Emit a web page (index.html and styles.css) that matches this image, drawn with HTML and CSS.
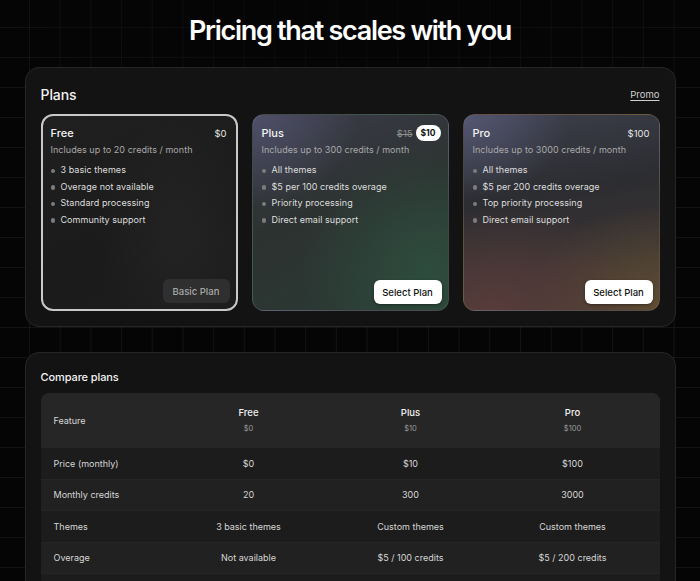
FILE: index.html
```html
<!DOCTYPE html>
<html lang="en">
<head>
<meta charset="utf-8">
<title>Pricing</title>
<link rel="stylesheet" href="styles.css">
</head>
<body>
<main class="page">
  <h1 class="title">Pricing that scales with you</h1>

  <section class="panel plans">
    <div class="panel-head">
      <h2 class="panel-title">Plans</h2>
      <a class="promo" href="#">Promo</a>
    </div>
    <div class="cards">
      <article class="card card-free">
        <div class="card-top">
          <span class="card-name">Free</span>
          <span class="card-price">$0</span>
        </div>
        <p class="card-sub">Includes up to 20 credits / month</p>
        <ul class="features">
          <li>3 basic themes</li>
          <li>Overage not available</li>
          <li>Standard processing</li>
          <li>Community support</li>
        </ul>
        <div class="card-foot"><button class="btn btn-muted">Basic Plan</button></div>
      </article>

      <article class="card card-plus">
        <div class="card-top">
          <span class="card-name">Plus</span>
          <span class="card-price"><s class="old">$15</s><span class="pill">$10</span></span>
        </div>
        <p class="card-sub">Includes up to 300 credits / month</p>
        <ul class="features">
          <li>All themes</li>
          <li>$5 per 100 credits overage</li>
          <li>Priority processing</li>
          <li>Direct email support</li>
        </ul>
        <div class="card-foot"><button class="btn btn-light">Select Plan</button></div>
      </article>

      <article class="card card-pro">
        <div class="card-top">
          <span class="card-name">Pro</span>
          <span class="card-price">$100</span>
        </div>
        <p class="card-sub">Includes up to 3000 credits / month</p>
        <ul class="features">
          <li>All themes</li>
          <li>$5 per 200 credits overage</li>
          <li>Top priority processing</li>
          <li>Direct email support</li>
        </ul>
        <div class="card-foot"><button class="btn btn-light">Select Plan</button></div>
      </article>
    </div>
  </section>

  <section class="panel compare">
    <div class="panel-head">
      <h2 class="panel-title small">Compare plans</h2>
    </div>
    <div class="table">
      <div class="row head">
        <div class="cell label">Feature</div>
        <div class="cell col"><span class="plan">Free</span><span class="plan-price">$0</span></div>
        <div class="cell col"><span class="plan">Plus</span><span class="plan-price">$10</span></div>
        <div class="cell col"><span class="plan">Pro</span><span class="plan-price">$100</span></div>
      </div>
      <div class="row">
        <div class="cell label">Price (monthly)</div>
        <div class="cell col">$0</div>
        <div class="cell col">$10</div>
        <div class="cell col">$100</div>
      </div>
      <div class="row alt">
        <div class="cell label">Monthly credits</div>
        <div class="cell col">20</div>
        <div class="cell col">300</div>
        <div class="cell col">3000</div>
      </div>
      <div class="row">
        <div class="cell label">Themes</div>
        <div class="cell col">3 basic themes</div>
        <div class="cell col">Custom themes</div>
        <div class="cell col">Custom themes</div>
      </div>
      <div class="row alt">
        <div class="cell label">Overage</div>
        <div class="cell col">Not available</div>
        <div class="cell col">$5 / 100 credits</div>
        <div class="cell col">$5 / 200 credits</div>
      </div>
      <div class="row row-more"></div>
    </div>
  </section>
</main>
</body>
</html>
```

FILE: styles.css
```css
* { box-sizing: border-box; }

html, body { height: 100%; }

body {
  margin: 0;
  font-family: Inter, "Noto Sans", "Liberation Sans", sans-serif;
  color: #e8e8e8;
  background-color: #050505;
  background-image:
    radial-gradient(ellipse 420px 160px at 50% 10px, rgba(5,5,5,0.85), rgba(5,5,5,0) 100%),
    linear-gradient(to right, rgba(255,255,255,0.055) 1px, transparent 1px),
    linear-gradient(to bottom, rgba(255,255,255,0.055) 1px, transparent 1px);
  background-size: 100% 100%, 30.7px 30.7px, 30.7px 30px;
  background-position: 0 0, 29px 0, 0 27px;
  overflow: hidden;
}

.page {
  width: 651px;
  margin: 0 auto;
  padding-top: 14px;
  display: flex;
  flex-direction: column;
}

.title {
  margin: 0 0 19px;
  font-size: 27px;
  line-height: 34px;
  font-weight: 600;
  letter-spacing: -1.3px;
  text-align: center;
  color: #fff;
}

.panel {
  background: #131313;
  border: 1px solid #262626;
  border-radius: 14px;
  padding: 15px;
}

.plans { height: 260px; }

.compare { margin-top: 25px; padding-bottom: 0; }

.panel-head {
  display: flex;
  justify-content: space-between;
  align-items: center;
  height: 22px;
  margin-bottom: 9px;
}

.compare .panel-head { height: 18px; margin-bottom: 7px; }

.panel-title {
  margin: 0;
  font-size: 14px;
  font-weight: 500;
  color: #f2f2f2;
  letter-spacing: -0.1px;
}

.panel-title.small { font-size: 11px; }

.promo {
  font-size: 9.5px;
  color: #d0d0d0;
  text-decoration: underline;
  text-underline-offset: 2px;
}

.cards {
  display: grid;
  grid-template-columns: repeat(3, 197px);
  justify-content: space-between;
}

.card {
  height: 197px;
  border-radius: 12px;
  padding: 9px 9px 6px 9px;
  display: flex;
  flex-direction: column;
  border: 1px solid rgba(255,255,255,0.12);
}

.card-free {
  border: 2px solid #c9c9c9;
  padding: 8px 9px 5px 8px;
  background:
    radial-gradient(ellipse 120px 160px at 70% 60%, rgba(40,40,40,0.6), transparent 70%),
    linear-gradient(160deg, #202020 0%, #1b1b1b 60%, #1d1d1d 100%);
}

.card-plus {
  background:
    radial-gradient(ellipse 150px 130px at 0% 0%, rgba(86,86,116,0.75), transparent 70%),
    radial-gradient(ellipse 170px 170px at 90% 80%, rgba(46,80,64,0.85), transparent 75%),
    linear-gradient(160deg, #3b3d4a 0%, #2d3231 45%, #2a3a33 100%);
  border-color: rgba(255,255,255,0.1);
}

.card-pro {
  background:
    radial-gradient(ellipse 150px 120px at 0% 0%, rgba(90,93,124,0.8), transparent 70%),
    radial-gradient(ellipse 200px 130px at 15% 100%, rgba(88,60,58,0.95), transparent 80%),
    radial-gradient(ellipse 170px 130px at 100% 100%, rgba(98,80,50,0.9), transparent 80%),
    linear-gradient(170deg, #3d3f4c 0%, #2c2d31 40%, #463835 100%);
  border-color: rgba(150,130,95,0.3);
}

.card-top {
  display: flex;
  justify-content: space-between;
  align-items: center;
  height: 18px;
}

.card-name {
  font-size: 11px;
  font-weight: 500;
  color: #f4f4f4;
}

.card-price {
  display: flex;
  align-items: center;
  gap: 3px;
  font-size: 9.5px;
  color: #e4e4e4;
}

.old {
  color: #8d8d8d;
  font-size: 9.5px;
}

.pill {
  background: #fff;
  color: #111;
  font-weight: 700;
  font-size: 8.5px;
  border-radius: 8px;
  height: 16px;
  padding: 0 5px;
  display: inline-flex;
  align-items: center;
  margin-right: -2px;
}

.card-sub {
  margin: 1px 0 0;
  font-size: 9px;
  line-height: 14px;
  color: #a9a9a9;
  letter-spacing: 0.05px;
}

.features {
  list-style: none;
  margin: 5px 0 0;
  padding: 0;
}

.features li {
  position: relative;
  font-size: 9px;
  line-height: 16.5px;
  color: #dedede;
  padding-left: 10px;
  letter-spacing: 0.05px;
}

.features li::before {
  content: "";
  position: absolute;
  left: 0;
  top: 6.5px;
  width: 4.5px;
  height: 4.5px;
  border-radius: 50%;
  background: #7c7c7c;
}

.card-foot {
  margin-top: auto;
  display: flex;
  justify-content: flex-end;
  margin-right: -3px;
}

.btn {
  font-family: inherit;
  border: 0;
  border-radius: 6px;
  height: 24px;
  font-size: 9.5px;
  font-weight: 500;
  padding: 0 10px;
}

.btn-muted {
  background: #2e2f2e;
  color: #a8a8a8;
  width: 67px;
  padding: 0;
  margin-bottom: 1px;
}

.btn-light {
  background: #fff;
  color: #111;
  width: 68px;
  padding: 0;
  box-shadow: 0 1px 3px rgba(0,0,0,0.4);
}

.table {
  border-radius: 8px 8px 0 0;
  overflow: hidden;
  background: #1c1c1c;
}

.row {
  display: grid;
  grid-template-columns: 127px 162px 162px 162px;
  height: 31.5px;
  align-items: center;
  background: #1c1c1c;
  border-top: 1px solid #252525;
}

.row.alt { background: #212121; }

.row.head {
  height: 54px;
  background: #262626;
  border-top: 0;
}

.row-more { height: 20px; }

.cell {
  font-size: 9px;
  color: #d6d6d6;
}

.label {
  padding-left: 13px;
}

.col {
  text-align: center;
}

.head .col {
  display: flex;
  flex-direction: column;
  align-items: center;
  gap: 6px;
}

.plan {
  font-size: 9.5px;
  font-weight: 500;
  color: #f0f0f0;
}

.plan-price {
  font-size: 7.5px;
  color: #9a9a9a;
}
```
